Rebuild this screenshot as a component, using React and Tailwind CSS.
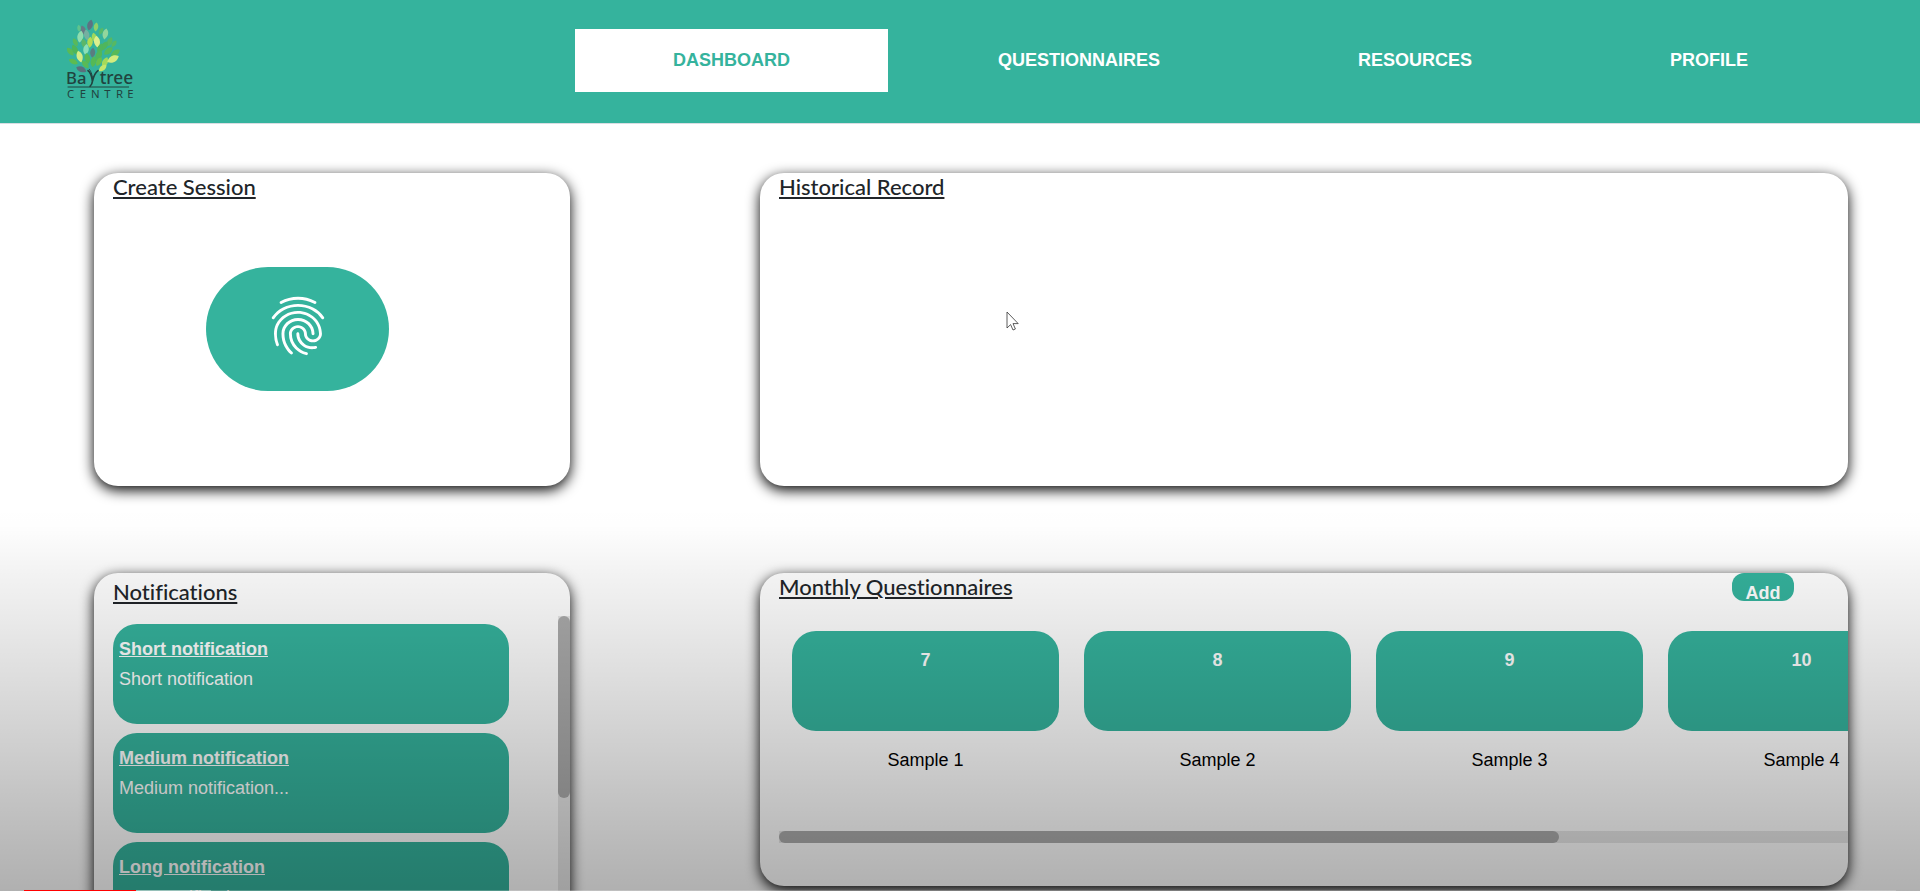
import React from "react";
import { MdFingerprint } from "react-icons/md";

const NAV = [
  { label: "DASHBOARD", active: true },
  { label: "QUESTIONNAIRES" },
  { label: "RESOURCES" },
  { label: "PROFILE" },
];

const NOTIFICATIONS = [
  { title: "Short notification", body: "Short notification" },
  { title: "Medium notification", body: "Medium notification..." },
  { title: "Long notification", body: "Long notification..." },
];

const QUESTIONNAIRES = [
  { count: 7, name: "Sample 1" },
  { count: 8, name: "Sample 2" },
  { count: 9, name: "Sample 3" },
  { count: 10, name: "Sample 4" },
];

// Leaves of the tree: centre x, centre y, rotation, scale, colour
const LEAVES = [
  [150, 74, 15, 1.1, "#5d7283"],
  [168, 80, 8, 0.9, "#8fd06a"],
  [130, 90, -18, 1, "#667a86"],
  [117, 84, -5, 0.7, "#5fc48c"],
  [196, 101, 12, 1.1, "#92d69c"],
  [183, 93, 30, 0.8, "#55b96a"],
  [121, 109, 10, 1.2, "#8fdcae"],
  [140, 104, -8, 1.1, "#74b0a0"],
  [150, 126, 5, 1.1, "#b3dc52"],
  [163, 112, -12, 1, "#9fd85c"],
  [171, 124, -8, 1.2, "#ddf08c"],
  [106, 126, -25, 0.9, "#58b95a"],
  [132, 130, -15, 1, "#5cb768"],
  [209, 124, 25, 1, "#56b863"],
  [222, 130, 35, 0.8, "#56b863"],
  [193, 137, 35, 1.1, "#4fb65c"],
  [180, 145, 20, 1.1, "#4fb65c"],
  [138, 147, 8, 1.1, "#8be0b8"],
  [158, 157, 5, 1, "#5a7d80"],
  [91, 154, -40, 1, "#59bb56"],
  [105, 148, -25, 1.1, "#4fb657"],
  [119, 169, -15, 1.2, "#d3ec84"],
  [100, 184, -65, 1, "#5cbb50"],
  [142, 174, -12, 1.1, "#55b955"],
  [160, 184, 8, 1.1, "#55b955"],
  [176, 165, 25, 1.2, "#52b75a"],
  [205, 152, 50, 1.1, "#56b95a"],
  [226, 158, 55, 1.1, "#58ba58"],
  [177, 184, 30, 1, "#68bf4d"],
  [195, 186, 25, 1.1, "#a4da5a"],
  [219, 176, 62, 1.3, "#d3ec7e"],
  [188, 203, 50, 1, "#c3e66c"],
  [124, 207, -68, 1.1, "#5a6f7c"],
  [136, 192, -40, 1, "#59ba56"],
];

function Logo() {
  return (
    <svg viewBox="75 50 210 249" className="h-[83px] w-[70px]" role="img" aria-label="Baytree Centre">
      {LEAVES.map(([x, y, r, s, fill]) => (
        <path
          key={`${x}-${y}`}
          d="M0-15C10-7 10 6 0 15C-10 6-10-7 0-15Z"
          fill={fill}
          transform={`translate(${x} ${y}) rotate(${r}) scale(${s})`}
        />
      ))}
      <g fill="none" stroke="#21433f" strokeLinecap="round">
        <path d="M144 211C151 216 155 228 157 240" strokeWidth="5" />
        <path d="M174 211C165 218 161 228 158 240C157 248 156 253 150 258" strokeWidth="5" />
        <path d="M158 236C156 220 152 212 148 207" strokeWidth="3" />
        <path d="M84 260H266" strokeWidth="3" />
      </g>
      <g fill="#21433f" fontFamily="'Noto Sans', 'Open Sans', sans-serif">
        <text x="78" y="251" fontSize="50" fontWeight="500">Ba</text>
        <text x="179" y="251" fontSize="52" fontWeight="500">tree</text>
        <text x="81 119 153 193 228 262" y="293" fontSize="34" fontWeight="400">CENTRE</text>
      </g>
    </svg>
  );
}

function Card({ title, titleClass = "", heightClass = "h-[313px]", children, action }) {
  return (
    <section className={`relative rounded-3xl bg-white shadow-[0_4px_14px_#000] ${heightClass}`}>
      <div className="flex h-full flex-col overflow-hidden rounded-3xl pl-[19px]">
        <div className="flex items-start justify-between pr-[54px]">
          <h2
            className={`font-['Lato',sans-serif] text-[22px] leading-[28px] font-medium text-[#212529] underline [font-variant-ligatures:none] ${titleClass}`}
          >
            {title}
          </h2>
          {action}
        </div>
        {children}
      </div>
    </section>
  );
}

export default function App() {
  return (
    <div className="relative h-screen overflow-hidden bg-white font-['Liberation_Sans',Arial,sans-serif] text-lg leading-[26px]">
      <header className="flex items-start justify-between border-b border-[#d9dde3] bg-[#35b39d] pr-[74px] pb-[23px] pl-[65px]">
        <a href="#home" className="pt-[17px]">
          <Logo />
        </a>
        <nav className="flex gap-0.5 pt-[29px]">
          {NAV.map(({ label, active }) => (
            <a
              key={label}
              href={`#${label.toLowerCase()}`}
              className={`px-[98px] py-[18px] leading-[27px] font-bold ${
                active ? "mr-2.5 bg-white text-[#35b39d]" : "text-white"
              }`}
            >
              {label}
            </a>
          ))}
        </nav>
      </header>

      <main className="grid grid-cols-[minmax(0,476fr)_minmax(0,1088fr)] items-start gap-x-[190px] gap-y-[87px] pt-[49px] pr-[72px] pl-[94px]">
        <Card title="Create Session">
          <button
            type="button"
            aria-label="Create session"
            className="mt-[66px] ml-[93px] flex h-[124px] w-[183px] shrink-0 items-start justify-center rounded-full bg-[#35b39d] pt-6 text-white"
          >
            <MdFingerprint className="size-[70px]" />
          </button>
        </Card>

        <Card title="Historical Record">
          <svg
            viewBox="0 0 13 20"
            className="absolute top-[138px] left-[246px] h-5 w-[13px]"
            fill="#fff"
            stroke="#333"
            strokeWidth="0.8"
            aria-hidden="true"
          >
            <path d="M1 1V17L4.6 13.6L7 19L9.4 18L7 12.6H12.2Z" />
          </svg>
        </Card>

        <Card title="Notifications" titleClass="mt-[5px]" heightClass="h-[360px]">
          <div className="mt-2.5 flex min-h-0 flex-1 justify-between">
            <ul className="mt-2 flex w-[396px] flex-col gap-[9px]">
              {NOTIFICATIONS.map(({ title, body }) => (
                <li
                  key={title}
                  className="flex h-[100px] shrink-0 flex-col gap-1 rounded-3xl bg-[#35b39d] px-1.5 pt-3 text-white"
                >
                  <h3 className="font-bold underline">{title}</h3>
                  <p>{body}</p>
                </li>
              ))}
            </ul>
            <div className="w-3 bg-[#e7e7e7]">
              <div className="h-[182px] rounded-full bg-[#ababab]" />
            </div>
          </div>
        </Card>

        <Card
          title="Monthly Questionnaires"
          action={
            <button
              type="button"
              className="flex h-7 w-[62px] items-start justify-center rounded-xl bg-[#35b39d] pt-[7px] font-bold text-white"
            >
              Add
            </button>
          }
        >
          <ul className="mt-[30px] ml-[13px] flex gap-[25px]">
            {QUESTIONNAIRES.map(({ count, name }) => (
              <li key={name} className="w-[267px] shrink-0 text-center">
                <div className="h-[100px] rounded-3xl bg-[#35b39d] pt-4 font-bold text-white">{count}</div>
                <p className="pt-4 text-black">{name}</p>
              </li>
            ))}
          </ul>
          <div className="mt-[58px] h-3 bg-[#e7e7e7]">
            <div className="h-3 w-[73%] rounded-full bg-[#ababab]" />
          </div>
        </Card>
      </main>

      <div className="pointer-events-none absolute inset-x-0 bottom-0 flex h-[390px] flex-col justify-end bg-[linear-gradient(to_bottom,rgba(0,0,0,0),rgba(0,0,0,0.005)_6%,rgba(0,0,0,0.05)_19%,rgba(0,0,0,0.085)_31%,rgba(0,0,0,0.175)_59%,rgba(0,0,0,0.265)_86%,rgba(0,0,0,0.31))]">
        <div className="mx-6 flex h-px bg-white/20">
          <div className="w-[6%] bg-[#f00]" />
          <div className="w-[4%] bg-white/40" />
        </div>
      </div>
    </div>
  );
}
